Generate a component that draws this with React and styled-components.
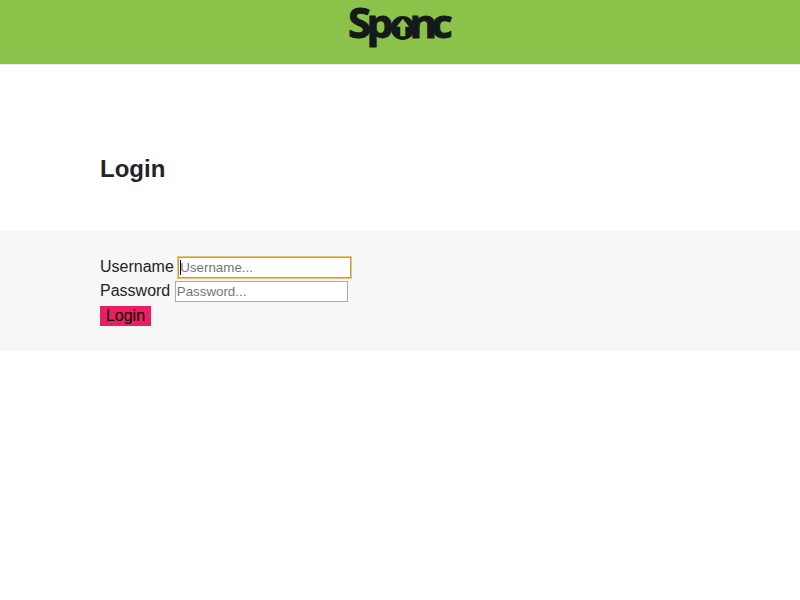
import React from "react";
import styled, { createGlobalStyle } from "styled-components";

const GlobalStyle = createGlobalStyle`
  *, *::before, *::after { box-sizing: border-box; }
  body {
    margin: 0;
    background: #fff;
    color: #212529;
    font: 16px/24px "Liberation Sans", Arial, sans-serif;
  }
`;

const Header = styled.header`
  display: flex;
  justify-content: center;
  height: 65px;
  border-bottom: 1px solid #ececec;
  background: #8bc34a;
  background-clip: padding-box;
`;

const Logo = styled.svg`
  display: block;
  width: 120px;
  height: 56px;
  overflow: visible;
  fill: #14191a;
  font-family: "Open Sans", sans-serif;
  font-weight: 700;
`;

const Letter = styled.text`
  font-size: ${(p) => (p.$capital ? 42 : 38.5)}px;
  stroke: #14191a;
  stroke-width: 0.9px;
`;

const Heading = styled.h1`
  margin: 89px 100px 47px;
  font-size: 24px;
  line-height: 30px;
  font-weight: 700;
`;

const LoginForm = styled.form`
  display: flex;
  flex-direction: column;
  align-items: flex-start;
  height: 120px;
  padding: 24px 100px;
  background: #f7f7f7;
`;

const Field = styled.label`
  display: flex;
  align-items: flex-start;
  gap: 4.5px;
  height: 24px;
`;

const Input = styled.input`
  width: 173px;
  height: 21px;
  margin: 2px 0 0;
  padding: 1px;
  border: 1px solid ${(p) => (p.$active ? "#c99a45" : "#a9a9a9")};
  border-radius: 0;
  outline: none;
  box-shadow: ${(p) => (p.$active ? "0 0 0 1px #f0c36d" : "none")};
  background: ${(p) =>
    p.$active
      ? "linear-gradient(#000, #000) 1px 2px / 1px 15px no-repeat #fff"
      : "#fff"};
  font: 13.333px "Liberation Sans", Arial, sans-serif;

  &::placeholder { color: #757575; opacity: 1; }
`;

const Submit = styled.button`
  width: 51px;
  height: 20px;
  margin: 3px 0 0;
  padding: 0;
  border: 0;
  background: #e91e63;
  color: #000;
  font: 16px/20px "Liberation Sans", Arial, sans-serif;
`;

function SponcLogo() {
  return (
    <Logo viewBox="340 0 120 56" role="img" aria-label="Sponc">
      <Letter $capital x="347.9" y="38">S</Letter>
      <Letter x="366.5" y="38" textLength="26.8" lengthAdjust="spacingAndGlyphs">p</Letter>
      <Letter x="409.4" y="38" textLength="27.6" lengthAdjust="spacingAndGlyphs">n</Letter>
      <Letter x="431.3" y="38" textLength="21.5" lengthAdjust="spacingAndGlyphs">c</Letter>
      <circle cx="402.7" cy="28" r="11.9" />
      <path d="M402.8 18.8 L409 26.7 H405.3 V36.3 H400.3 V26.7 H396.6 Z" fill="#8bc34a" />
    </Logo>
  );
}

export default function App() {
  return (
    <>
      <GlobalStyle />
      <Header><SponcLogo /></Header>
      <main>
        <Heading>Login</Heading>
        <LoginForm>
          <Field>Username <Input $active placeholder="Username..." /></Field>
          <Field>Password <Input type="password" placeholder="Password..." /></Field>
          <Submit type="button">Login</Submit>
        </LoginForm>
      </main>
    </>
  );
}
